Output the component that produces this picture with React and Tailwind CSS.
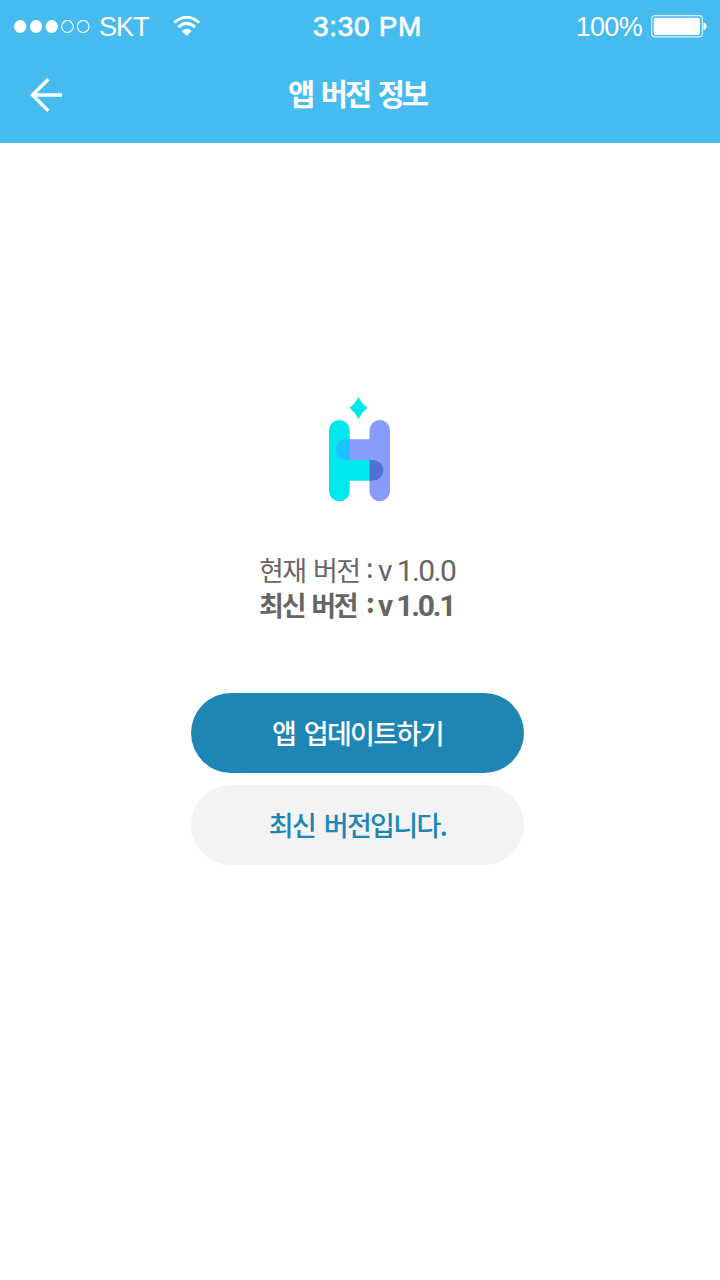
function StatusBar() {
  return (
    <div className="grid h-[53px] grid-cols-[1fr_auto_1fr] items-center pr-[13px] pl-[14px] font-['Liberation_Sans',sans-serif] text-[27px] leading-[53px]">
      <div className="flex items-center">
        <svg width="76" height="14" viewBox="0 0 76 14" fill="none">
          <ellipse cx="6.2" cy="6.5" rx="6.2" ry="6.5" fill="white" />
          <ellipse cx="22" cy="6.5" rx="6.2" ry="6.5" fill="white" />
          <ellipse cx="37.7" cy="6.5" rx="6.2" ry="6.5" fill="white" />
          <ellipse cx="53.5" cy="6.5" rx="5.8" ry="6" stroke="white" strokeWidth="1.1" />
          <ellipse cx="69.2" cy="6.5" rx="5.8" ry="6" stroke="white" strokeWidth="1.1" />
        </svg>
        <span className="ml-[9px] w-[50px] pt-px text-[27px] leading-[52px] tracking-[-0.9px]">SKT</span>
        <svg className="ml-6" width="28" height="22" viewBox="0 0 28 22" fill="none">
          <path d="M1.2 6.6Q13.7-4.1 26.2 6.6" stroke="white" strokeWidth="3" />
          <path d="M5.4 11.2Q13.7 3.4 22 11.2" stroke="white" strokeWidth="3" />
          <path d="M8.8 15Q13.7 10.6 18.6 15L13.7 20Z" fill="white" />
        </svg>
      </div>
      <span className="pl-[14px] text-[28px] tracking-[0.7px] [-webkit-text-stroke:0.7px_white]">3:30 PM</span>
      <div className="flex items-center justify-end">
        <span className="pt-px leading-[52px] tracking-[-0.7px]">100%</span>
        <svg className="ml-[9px]" width="56" height="23" viewBox="0 0 56 23" fill="none">
          <rect x="0.7" y="0.7" width="50.6" height="21.2" rx="3.2" stroke="white" strokeOpacity=".8" strokeWidth="1.2" />
          <rect x="2.7" y="2.7" width="46.2" height="17.2" rx="2" fill="white" />
          <path d="M52.5 7.3Q55.5 8.2 55.5 11.3T52.5 15.3Z" fill="white" />
        </svg>
      </div>
    </div>
  );
}

function Logo() {
  return (
    <svg width="62" height="105" viewBox="0 0 62 105">
      <path d="M29.5 0Q33 7 38.5 10.7Q33 15 29.5 22Q26 15 20.5 10.7Q26 7 29.5 0Z" fill="#00e8ed" />
      <path d="M0 33.3a10.35 10.35 0 0 1 20.7 0V63H44a10.3 10.3 0 0 1 0 20.7H20.7V94a10.35 10.35 0 0 1-20.7 0Z" fill="#00e8ed" />
      <path d="M40.5 33.3a10.25 10.25 0 0 1 20.5 0V94a10.25 10.25 0 0 1-20.5 0V63H17a10.3 10.3 0 0 1 0-20.8H40.5Z" fill="#879cfd" />
      <path d="M20.7 42.2H17A10.4 10.4 0 0 0 17 63H20.7Z" fill="#1cc3ff" />
      <path d="M40.5 63H44A10.35 10.35 0 0 1 44 83.7H40.5Z" fill="#5271d0" />
    </svg>
  );
}

function VersionLine({ label, version, className }) {
  return (
    <p className={`flex h-[35px] items-baseline ${className}`}>
      <span className="w-[107px] [word-spacing:3px]">{label}</span>
      <span className="w-[12px] -translate-y-[3px]">:</span>
      <span className="font-['Roboto',sans-serif] text-[30px]">{version}</span>
    </p>
  );
}

export default function App() {
  return (
    <main className="flex h-[1280px] w-[720px] flex-col items-center bg-white font-['Noto_Sans_CJK_KR',sans-serif]">
      <header className="h-[143px] w-full bg-[#46bbef] text-white">
        <StatusBar />
        <div className="grid h-[84px] grid-cols-[32px_1fr_32px] items-center px-[30px]">
          <button aria-label="뒤로">
            <svg width="32" height="34" viewBox="0 0 32 34" fill="none" stroke="white" strokeWidth="3.4">
              <path d="M18.3 1.3L2.4 17L18.3 32.7M2.4 17H32" />
            </svg>
          </button>
          <h1 className="pr-[6px] pb-[6px] text-center text-[29.5px] leading-[40px] font-bold tracking-[-3px] [word-spacing:5px]">앱 버전 정보</h1>
        </div>
      </header>

      <div className="mt-[254px] flex">
        <Logo />
      </div>

      <section className="mt-[50px] w-[202px] text-[27px] leading-[35px] tracking-[-2px] whitespace-nowrap text-[#666]">
        <VersionLine label="현재 버전" version="v 1.0.0" className="tracking-[-1.6px]" />
        <VersionLine label="최신 버전" version="v 1.0.1" className="font-bold tracking-[-2.2px]" />
      </section>

      <div className="mt-[71px] mr-[5px] flex w-[333px] flex-col gap-3 text-[27px] font-medium tracking-[-1.6px]">
        <button className="h-20 rounded-full bg-[#1d86b4] text-white [word-spacing:4px]">앱 업데이트하기</button>
        <button className="h-20 rounded-full bg-[#f3f3f3] text-[#1d86b4] [word-spacing:4px]">최신 버전입니다.</button>
      </div>
    </main>
  );
}
